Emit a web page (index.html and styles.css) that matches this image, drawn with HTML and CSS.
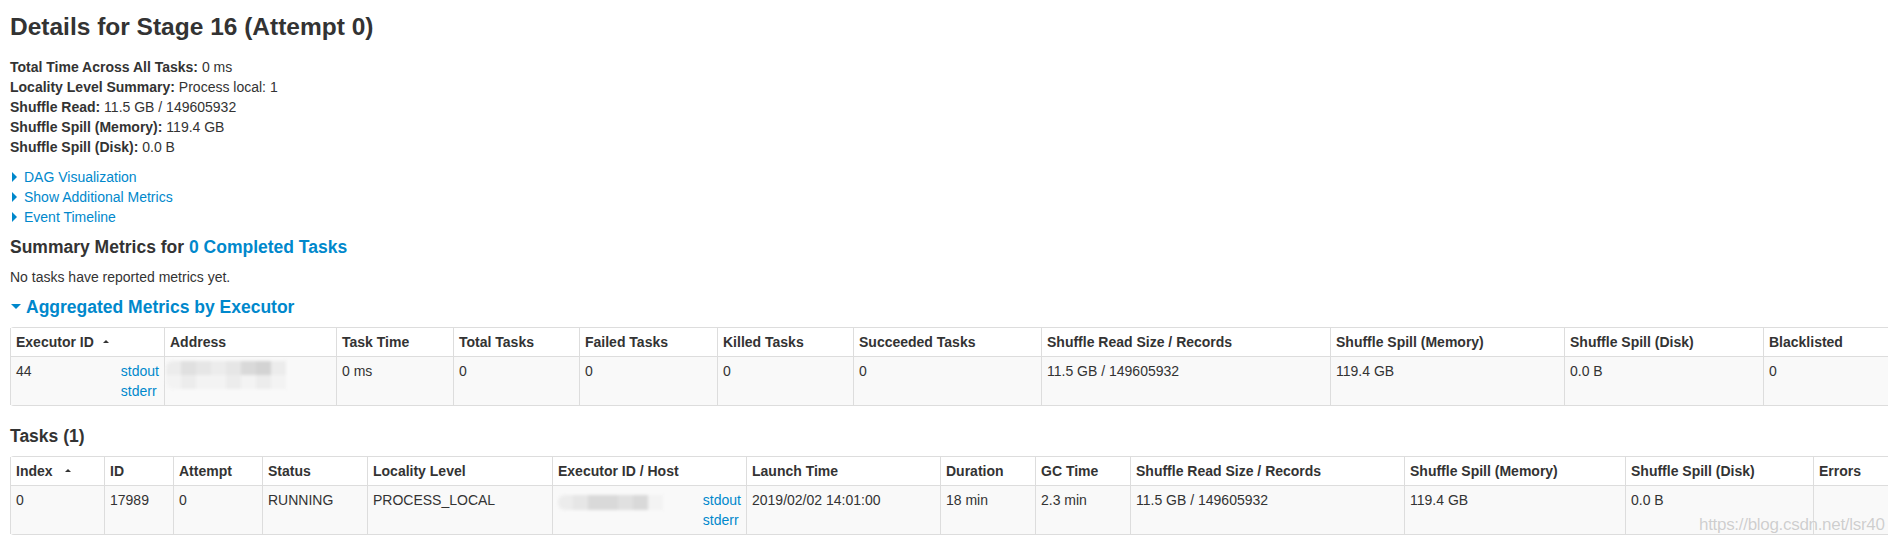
FILE: index.html
```html
<!DOCTYPE html>
<html>
<head>
<meta charset="utf-8">
<title>Stage 16</title>
<link rel="stylesheet" href="styles.css">
</head>
<body>
<div class="page">
  <h3 class="title">Details for Stage 16 (Attempt 0)</h3>
  <ul class="summary">
    <li><strong>Total Time Across All Tasks:</strong> 0 ms</li>
    <li><strong>Locality Level Summary:</strong> Process local: 1</li>
    <li><strong>Shuffle Read:</strong> 11.5 GB / 149605932</li>
    <li><strong>Shuffle Spill (Memory):</strong> 119.4 GB</li>
    <li><strong>Shuffle Spill (Disk):</strong> 0.0 B</li>
  </ul>
  <div class="toggles">
    <div class="toggle"><span class="arrow-closed"></span><a href="#">DAG Visualization</a></div>
    <div class="toggle"><span class="arrow-closed"></span><a href="#">Show Additional Metrics</a></div>
    <div class="toggle"><span class="arrow-closed"></span><a href="#">Event Timeline</a></div>
  </div>
  <h4 class="section">Summary Metrics for <a href="#">0 Completed Tasks</a></h4>
  <p class="note">No tasks have reported metrics yet.</p>
  <h4 class="section"><span class="arrow-open"></span><a href="#">Aggregated Metrics by Executor</a></h4>
  <table class="grid exec">
    <thead>
      <tr>
        <th>Executor ID<span class="sort"></span></th>
        <th>Address</th>
        <th>Task Time</th>
        <th>Total Tasks</th>
        <th>Failed Tasks</th>
        <th>Killed Tasks</th>
        <th>Succeeded Tasks</th>
        <th>Shuffle Read Size / Records</th>
        <th>Shuffle Spill (Memory)</th>
        <th>Shuffle Spill (Disk)</th>
        <th>Blacklisted</th>
      </tr>
    </thead>
    <tbody>
      <tr>
        <td><div class="logs"><a href="#">stdout</a><a href="#">stderr</a></div>44</td>
        <td><div class="blob blob-a">
          <div class="blob-row"><i class="g1"></i><i class="g3"></i><i class="g2"></i><i class="g1"></i><i class="g2"></i><i class="g4"></i><i class="g5"></i><i class="g1"></i></div>
          <div class="blob-row"><i class="g0"></i><i class="g1"></i><i class="g0"></i><i class="g0"></i><i class="g1"></i><i class="g0"></i><i class="g1"></i><i class="g0"></i></div>
        </div></td>
        <td>0 ms</td>
        <td>0</td>
        <td>0</td>
        <td>0</td>
        <td>0</td>
        <td>11.5 GB / 149605932</td>
        <td>119.4 GB</td>
        <td>0.0 B</td>
        <td>0</td>
      </tr>
    </tbody>
  </table>
  <h4 class="section">Tasks (1)</h4>
  <table class="grid tasks">
    <thead>
      <tr>
        <th>Index<span class="sort sort-wide"></span></th>
        <th>ID</th>
        <th>Attempt</th>
        <th>Status</th>
        <th>Locality Level</th>
        <th>Executor ID / Host</th>
        <th>Launch Time</th>
        <th>Duration</th>
        <th>GC Time</th>
        <th>Shuffle Read Size / Records</th>
        <th>Shuffle Spill (Memory)</th>
        <th>Shuffle Spill (Disk)</th>
        <th>Errors</th>
      </tr>
    </thead>
    <tbody>
      <tr>
        <td>0</td>
        <td>17989</td>
        <td>0</td>
        <td>RUNNING</td>
        <td>PROCESS_LOCAL</td>
        <td><div class="logs"><a href="#">stdout</a><a href="#">stderr</a></div><div class="blob blob-b">
          <div class="blob-row"><i class="g1"></i><i class="g2"></i><i class="g4"></i><i class="g4"></i><i class="g3"></i><i class="g4"></i><i class="g0"></i></div>
        </div></td>
        <td>2019/02/02 14:01:00</td>
        <td>18 min</td>
        <td>2.3 min</td>
        <td>11.5 GB / 149605932</td>
        <td>119.4 GB</td>
        <td>0.0 B</td>
        <td></td>
      </tr>
    </tbody>
  </table>
</div>
<div class="watermark">https://blog.csdn.net/lsr40</div>
</body>
</html>
```

FILE: styles.css
```css
html, body {
  margin: 0;
  padding: 0;
  overflow: hidden;
  background: #ffffff;
}

body {
  font-family: "Liberation Sans", Arial, Helvetica, sans-serif;
  font-size: 14px;
  line-height: 20px;
  color: #333333;
}

a {
  color: #0088cc;
  text-decoration: none;
}

.page {
  padding: 0 10px;
}

.title {
  margin: 7px 0 10px;
  font-size: 24.5px;
  line-height: 40px;
  font-weight: bold;
  color: #333333;
}

.summary {
  list-style: none;
  margin: 0 0 10px;
  padding: 0;
}

.summary strong {
  font-weight: bold;
}

.toggles {
  margin: 0;
}

.toggle {
  line-height: 20px;
}

.arrow-closed {
  display: inline-block;
  width: 0;
  height: 0;
  margin: 0 7px 0 2px;
  border-top: 5px solid transparent;
  border-bottom: 5px solid transparent;
  border-left: 5px solid #0088cc;
  vertical-align: middle;
  position: relative;
  top: -1px;
}

.arrow-open {
  display: inline-block;
  width: 0;
  height: 0;
  margin: 0 5px 0 1px;
  border-left: 5px solid transparent;
  border-right: 5px solid transparent;
  border-top: 5px solid #0088cc;
  vertical-align: middle;
  position: relative;
  top: -2px;
}

.section {
  margin: 10px 0;
  font-size: 17.5px;
  line-height: 20px;
  font-weight: bold;
  color: #333333;
}

.note {
  margin: 0 0 10px;
}

.grid {
  border-collapse: separate;
  border-spacing: 0;
  border: 1px solid #dddddd;
  border-left: 0;
  border-radius: 4px;
  table-layout: fixed;
  margin-bottom: 20px;
}

.grid th,
.grid td {
  box-sizing: border-box;
  padding: 4px 5px;
  line-height: 20px;
  text-align: left;
  vertical-align: top;
  border-left: 1px solid #dddddd;
  overflow: visible;
  white-space: nowrap;
}

.grid th {
  font-weight: bold;
  background: #ffffff;
}

.grid td {
  border-top: 1px solid #dddddd;
  background: #f9f9f9;
  height: 49px;
}

.sort {
  display: inline-block;
  width: 0;
  height: 0;
  margin-left: 9px;
  border-left: 3px solid transparent;
  border-right: 3px solid transparent;
  border-bottom: 3px solid #333333;
  vertical-align: middle;
  position: relative;
  top: -2px;
}

.sort-wide {
  margin-left: 12px;
}

.logs {
  float: right;
  display: flex;
  flex-direction: column;
  align-items: flex-start;
}

.blob {
  display: flex;
  flex-direction: column;
  filter: blur(1.5px);
}

.blob-row {
  display: flex;
}

.blob-row i {
  display: block;
  width: 15px;
  height: 14px;
}

.blob-a {
  width: 120px;
  margin-left: -4px;
}

.blob-a .blob-row:first-child i:first-child {
  border-top-left-radius: 7px;
}

.blob-a .blob-row:last-child i:first-child {
  border-bottom-left-radius: 7px;
}

.blob-b {
  width: 105px;
  margin: 5px 0 0 -2px;
}

.blob-b .blob-row i {
  height: 15px;
}

.blob-b .blob-row i:first-child {
  border-radius: 7px 0 0 7px;
}

.g0 { background: #f3f3f3; }
.g1 { background: #ececec; }
.g2 { background: #e6e6e6; }
.g3 { background: #e0e0e0; }
.g4 { background: #d9d9d9; }
.g5 { background: #d3d3d3; }

/* column widths: executors table */
.exec { width: 1904px; }
.exec th:nth-child(1) { width: 154px; }
.exec th:nth-child(2) { width: 172px; }
.exec th:nth-child(3) { width: 117px; }
.exec th:nth-child(4) { width: 126px; }
.exec th:nth-child(5) { width: 138px; }
.exec th:nth-child(6) { width: 136px; }
.exec th:nth-child(7) { width: 188px; }
.exec th:nth-child(8) { width: 289px; }
.exec th:nth-child(9) { width: 234px; }
.exec th:nth-child(10) { width: 199px; }
.exec th:nth-child(11) { width: 150px; }

/* column widths: tasks table */
.tasks { width: 1924px; }
.tasks th:nth-child(1) { width: 94px; }
.tasks th:nth-child(2) { width: 69px; }
.tasks th:nth-child(3) { width: 89px; }
.tasks th:nth-child(4) { width: 105px; }
.tasks th:nth-child(5) { width: 185px; }
.tasks th:nth-child(6) { width: 194px; }
.tasks th:nth-child(7) { width: 194px; }
.tasks th:nth-child(8) { width: 95px; }
.tasks th:nth-child(9) { width: 95px; }
.tasks th:nth-child(10) { width: 274px; }
.tasks th:nth-child(11) { width: 221px; }
.tasks th:nth-child(12) { width: 188px; }
.tasks th:nth-child(13) { width: 120px; }

.watermark {
  position: absolute;
  left: 1699px;
  top: 513px;
  font-family: "Liberation Sans", Arial, sans-serif;
  font-size: 17px;
  line-height: 24px;
  color: rgba(190, 190, 190, 0.75);
  text-shadow: 0 0 1px #ffffff;
  letter-spacing: -0.3px;
  white-space: nowrap;
}
```
